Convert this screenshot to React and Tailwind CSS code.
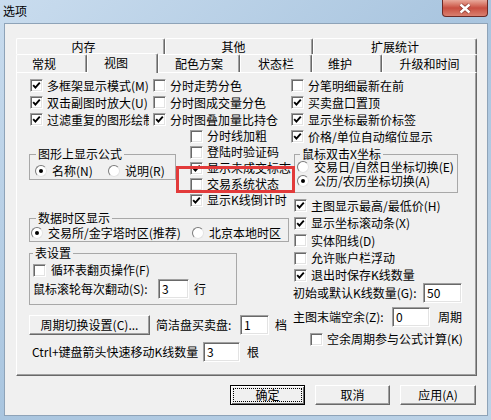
import React from 'react'

// Classic Win32 controls, 12px SimSun-ish metrics
function Check({ on }) {
  return (
    <span className="w-[13px] h-[13px] shrink-0 bg-white border border-t-[#a0a0a0] border-l-[#a0a0a0] border-b-white border-r-white shadow-[inset_1px_1px_0_#696969,inset_-1px_-1px_0_#e3e3e3] flex items-center justify-center">
      {on && (
        <svg width="9" height="9" viewBox="0 0 9 9">
          <path d="M1.2 4.2 L3.4 6.6 L7.8 1.6" fill="none" stroke="#000" strokeWidth="1.9" />
        </svg>
      )}
    </span>
  )
}

function Radio({ on }) {
  return (
    <span className="w-[12px] h-[12px] shrink-0 rounded-full bg-white border border-t-[#7a7a7a] border-l-[#7a7a7a] border-b-[#e3e3e3] border-r-[#e3e3e3] flex items-center justify-center">
      {on && <span className="w-[4px] h-[4px] rounded-full bg-black" />}
    </span>
  )
}

function CheckRow({ on, children, className = '' }) {
  return (
    <div className={`flex items-center gap-[4px] whitespace-nowrap ${className}`}>
      <Check on={on} />
      <span>{children}</span>
    </div>
  )
}

function RadioItem({ on, children, className = '' }) {
  return (
    <div className={`flex items-center gap-[5px] whitespace-nowrap ${className}`}>
      <Radio on={on} />
      <span>{children}</span>
    </div>
  )
}

function Field({ value, className = '' }) {
  return (
    <div className={`h-[20px] shrink-0 bg-white border border-t-[#a0a0a0] border-l-[#a0a0a0] border-b-white border-r-white shadow-[inset_1px_1px_0_#696969,inset_-1px_-1px_0_#e3e3e3] pl-[3px] flex items-center ${className}`}>
      {value}
    </div>
  )
}

function Group({ title, legend = '', className = '', children }) {
  return (
    <fieldset className={`min-w-0 border border-[#a8a8a8] ${className}`}>
      <legend className={`px-[2px] leading-[12px] ${legend}`}>{title}</legend>
      {children}
    </fieldset>
  )
}

function Btn({ children, className = '' }) {
  return (
    <div className={`h-[20px] shrink-0 flex items-center justify-center whitespace-nowrap bg-[#f0f0f0] border border-t-white border-l-white border-b-[#696969] border-r-[#696969] shadow-[inset_-1px_-1px_0_#a0a0a0] ${className}`}>
      {children}
    </div>
  )
}

function Tab({ children, className = '' }) {
  return (
    <div className={`flex items-center justify-center whitespace-nowrap bg-[#f0f0f0] border-t border-l border-r border-t-white border-l-white border-r-[#696969] shadow-[inset_-1px_0_0_#a0a0a0] rounded-t-[2px] ${className}`}>
      {children}
    </div>
  )
}

export default function App() {
  return (
    <div className="relative w-[491px] h-[420px] overflow-hidden flex flex-col bg-gradient-to-br from-[#c9dcee] via-[#a9c5df] to-[#bdd3e7] font-['Noto_Sans_CJK_SC',sans-serif] text-[12px] leading-[14px] text-black">
      {/* title bar */}
      <div className="h-[23px] shrink-0 flex items-start">
        <span className="pl-[3px] pt-[4px]">选项</span>
        <div className="ml-auto mr-[3px] w-[46px] h-[17px] rounded-b-[4px] border border-t-0 border-[#6b2a26] bg-gradient-to-b from-[#e8a99b] via-[#c84e40] to-[#d98070] flex items-center justify-center">
          <svg width="14" height="11" viewBox="0 0 14 11">
            <path d="M2.5 1.5 L11.5 9.5 M11.5 1.5 L2.5 9.5" stroke="#5a1c18" strokeWidth="4" strokeOpacity="0.55" />
            <path d="M2.5 1.5 L11.5 9.5 M11.5 1.5 L2.5 9.5" stroke="#fff" strokeWidth="2.4" />
          </svg>
        </div>
      </div>

      {/* client area */}
      <div className="ml-[4px] mr-[3px] h-[393px] shrink-0 bg-[#f0f0f0] border border-[#8ea3b8] flex flex-col">
        <div className="ml-[11px] mt-[14px] w-[461px]">
          <div className="flex h-[16px]">
            <Tab className="w-[149px] pr-[14px]">内存</Tab>
            <Tab className="w-[148px] pr-[11px]">其他</Tab>
            <Tab className="w-[164px]">扩展统计</Tab>
          </div>
          <div className="flex h-[18px] items-end">
            <Tab className="w-[71px] h-[18px] pr-[15px]">常规</Tab>
            <Tab className="w-[71px] h-[20px] -mb-[1px] pr-[13px] pb-[2px] relative z-10">视图</Tab>
            <Tab className="w-[82px] h-[18px]">配色方案</Tab>
            <Tab className="w-[72px] h-[18px]">状态栏</Tab>
            <Tab className="w-[70px] h-[18px] pr-[14px]">维护</Tab>
            <Tab className="w-[95px] h-[18px]">升级和时间</Tab>
          </div>

          {/* tab page */}
          <div className="w-[461px] h-[304px] border border-t-white border-l-white border-b-[#696969] border-r-[#696969] shadow-[inset_-1px_-1px_0_#a0a0a0] pt-[4px] pl-[12px] flex">
            {/* left region */}
            <div className="w-[261px] shrink-0 flex flex-col">
              <div className="flex">
                <div className="w-[120px] overflow-hidden pl-[1px]">
                  <CheckRow on className="h-[17px]">多框架显示模式(M)</CheckRow>
                  <CheckRow on className="h-[17px]">双击副图时放大(U)</CheckRow>
                  <CheckRow on className="h-[17px]">过滤重复的图形绘制</CheckRow>
                </div>
                <div className="ml-[4px] w-[137px]">
                  <CheckRow className="h-[17px]">分时走势分色</CheckRow>
                  <CheckRow className="h-[17px]">分时图成交量分色</CheckRow>
                  <CheckRow on className="h-[17px]">分时图叠加量比持仓</CheckRow>
                </div>
              </div>

              <div className="flex items-start">
                <Group title="图形上显示公式" legend="ml-[6px]" className="w-[147px] mt-[20px] shrink-0">
                  <div className="h-[15px] mt-[3px] mb-[1px] pl-[5px] flex items-center">
                    <RadioItem on className="w-[73px]">名称(N)</RadioItem>
                    <RadioItem>说明(R)</RadioItem>
                  </div>
                </Group>
                <div className="ml-[14px] flex flex-col">
                  <CheckRow className="h-[16px]">分时线加粗</CheckRow>
                  <CheckRow className="h-[16px]">登陆时验证码</CheckRow>
                  <CheckRow on className="h-[16px]">显示未成交标志</CheckRow>
                  <CheckRow className="h-[16px]">交易系统状态</CheckRow>
                  <CheckRow on className="h-[16px]">显示K线倒计时</CheckRow>
                </div>
              </div>

              <Group title="数据时区显示" legend="ml-[6px]" className="w-[260px] mt-[4px]">
                <div className="h-[17px] pl-[1px] flex items-center">
                  <RadioItem on className="w-[161px]">交易所/金字塔时区(推荐)</RadioItem>
                  <RadioItem>北京本地时区</RadioItem>
                </div>
              </Group>

              <Group title="表设置" legend="ml-[3px]" className="w-[208px] mt-[5px] pb-[5px]">
                <div className="pl-[3px]">
                  <CheckRow className="h-[18px] mt-[2px] gap-[5px]">循环表翻页操作(F)</CheckRow>
                  <div className="h-[20px] flex items-center">
                    <span className="w-[125px] whitespace-nowrap">鼠标滚轮每次翻动(S):</span>
                    <Field value="3" className="w-[31px]" />
                    <span className="ml-[5px]">行</span>
                  </div>
                </div>
              </Group>

              <div className="mt-[10px] h-[20px] flex items-center">
                <Btn className="w-[121px]">周期切换设置(C)...</Btn>
                <span className="ml-[6px] w-[84px] whitespace-nowrap">简洁盘买卖盘:</span>
                <Field value="1" className="w-[29px]" />
                <span className="ml-[6px]">档</span>
              </div>

              <div className="mt-[7px] h-[20px] flex items-center">
                <span className="pl-[3px] w-[174px] whitespace-nowrap">Ctrl+键盘箭头快速移动K线数量</span>
                <Field value="3" className="w-[37px]" />
                <span className="ml-[7px]">根</span>
              </div>
            </div>

            {/* right column */}
            <div className="w-[186px] shrink-0 flex flex-col">
              <div className="pl-[1px]">
                <CheckRow className="h-[17px]">分笔明细最新在前</CheckRow>
                <CheckRow on className="h-[17px]">买卖盘口置顶</CheckRow>
                <CheckRow on className="h-[17px]">显示坐标最新价标签</CheckRow>
                <CheckRow on className="h-[17px]">价格/单位自动缩位显示</CheckRow>
              </div>

              <Group title="鼠标双击X坐标" legend="ml-[5px]" className="ml-[4px] w-[164px] mt-[3px] pb-[4px]">
                <div className="pl-[2px]">
                  <RadioItem className="h-[14px] gap-[4px]">交易日/自然日坐标切换(E)</RadioItem>
                  <RadioItem on className="h-[14px] gap-[4px]">公历/农历坐标切换(A)</RadioItem>
                </div>
              </Group>

              <div className="mt-[4px] pl-[4px]">
                <CheckRow on className="h-[17px]">主图显示最高/最低价(H)</CheckRow>
                <CheckRow on className="h-[18px]">显示坐标滚动条(X)</CheckRow>
                <CheckRow className="h-[17px]">实体阳线(D)</CheckRow>
                <CheckRow className="h-[18px]">允许账户栏浮动</CheckRow>
                <CheckRow on className="h-[16px]">退出时保存K线数量</CheckRow>
              </div>

              <div className="h-[20px] pl-[3px] flex items-center">
                <span className="w-[130px] whitespace-nowrap">初始或默认K线数量(G):</span>
                <Field value="50" className="w-[39px]" />
              </div>
              <div className="mt-[4px] h-[20px] pl-[3px] flex items-center">
                <span className="w-[99px] whitespace-nowrap">主图末端空余(Z):</span>
                <Field value="0" className="w-[38px]" />
                <span className="ml-[8px]">周期</span>
              </div>
              <CheckRow className="mt-[4px] h-[16px] pl-[20px]">空余周期参与公式计算(K)</CheckRow>
            </div>
          </div>
        </div>

        {/* dialog buttons */}
        <div className="mt-[9px] ml-[225px] flex gap-[10px]">
          <div className="w-[75px] h-[20px] flex bg-[#f0f0f0] border border-black shadow-[inset_1px_1px_0_#fff,inset_-1px_-1px_0_#696969]">
            <div className="flex-1 m-[2px] border border-dotted border-black flex items-center justify-center">确定</div>
          </div>
          <Btn className="w-[75px]">取消</Btn>
          <Btn className="w-[76px]">应用(A)</Btn>
        </div>
      </div>

      {/* red highlight annotation */}
      <div className="absolute left-[176px] top-[166px] w-[119px] h-[27px] border-[3px] border-[#e23a3a]" />
    </div>
  )
}
